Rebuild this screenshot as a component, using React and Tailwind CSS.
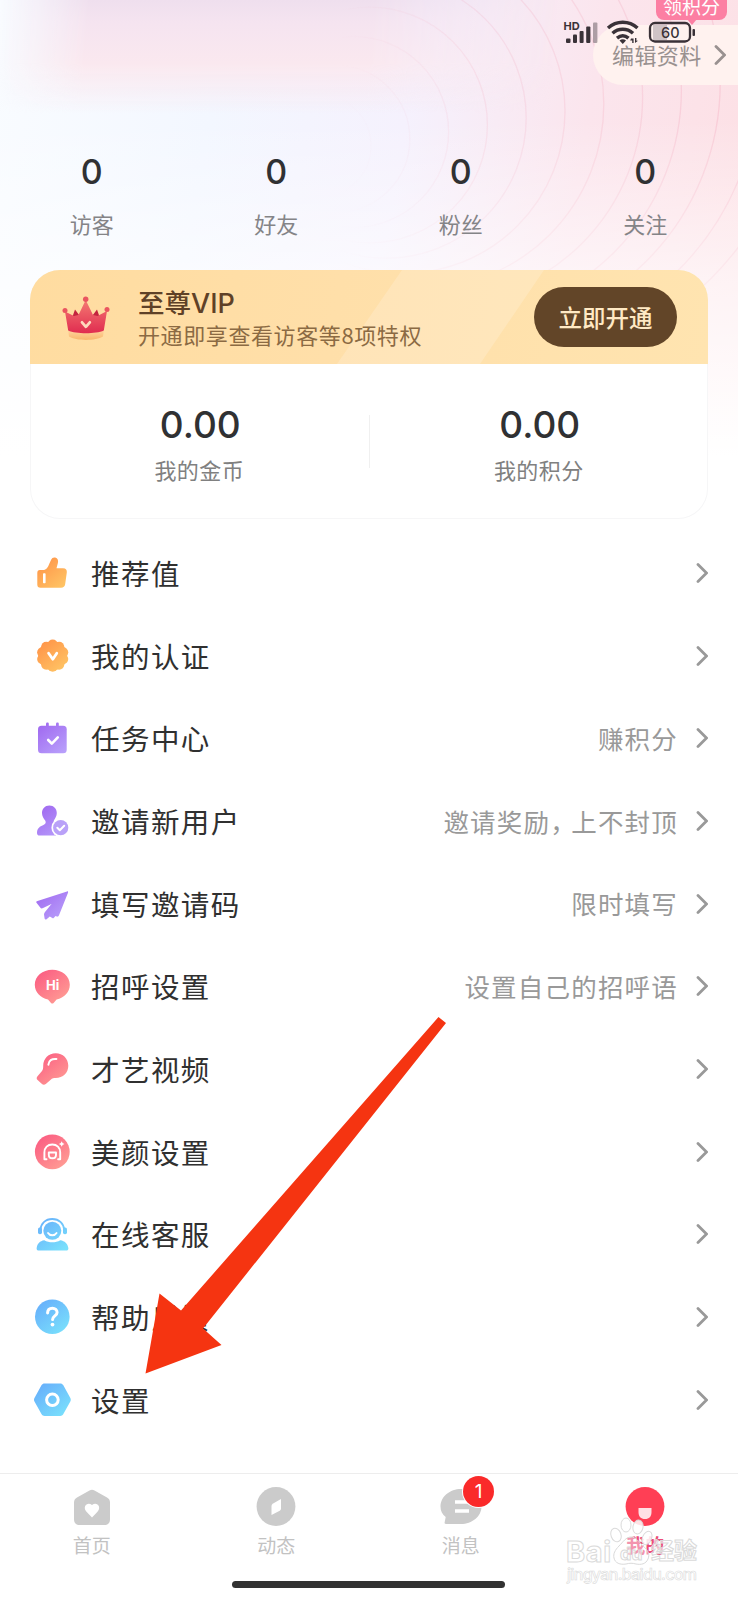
const ROWS = [
  { label: '推荐值', icon: 'thumb' },
  { label: '我的认证', icon: 'verified' },
  { label: '任务中心', icon: 'task', note: '赚积分' },
  { label: '邀请新用户', icon: 'invite', note: <>邀请奖励<span className="inline-block w-[21px]">，</span>上不封顶</> },
  { label: '填写邀请码', icon: 'plane', note: '限时填写' },
  { label: '招呼设置', icon: 'greet', note: '设置自己的招呼语' },
  { label: '才艺视频', icon: 'mic' },
  { label: '美颜设置', icon: 'beauty' },
  { label: '在线客服', icon: 'support' },
  { label: '帮助反馈', icon: 'help' },
  { label: '设置', icon: 'settings' },
];

const STATS = ['访客', '好友', '粉丝', '关注'];

const BUMPS = Array.from({ length: 10 }, (_, i) => {
  const a = (i * Math.PI) / 5 - Math.PI / 2;
  return { x: 18.7 + 11 * Math.cos(a), y: 16.7 + 11 * Math.sin(a) };
});

// Ripples drift to the right and up as they grow
const RIPPLES = Array.from({ length: 12 }, (_, i) => ({
  cx: 320 + 16.5 * i,
  cy: 146 - 7 * i,
  r: 51 + 22.3 * i,
}));

const Gradient = ({ id, from, to }) => (
  <linearGradient id={id} gradientUnits="userSpaceOnUse" x1="6" y1="3" x2="30" y2="33">
    <stop offset="0" stopColor={from} />
    <stop offset="1" stopColor={to} />
  </linearGradient>
);

const Gradients = () => (
  <svg className="absolute w-0 h-0" aria-hidden="true">
    <defs>
      <Gradient id="orange" from="#ff9348" to="#ffc766" />
      <Gradient id="purple" from="#a069f0" to="#b9a1fb" />
      <Gradient id="pink" from="#fb5f83" to="#ff9d94" />
      <Gradient id="blue" from="#68b1fb" to="#79e0fc" />
    </defs>
  </svg>
);

const ICONS = {
  thumb: (
    <>
      <path
        fill="url(#orange)"
        d="M5.8 14H9c3.200 0 5-2.600 6.300-6.300L17 4c.9-2 2.400-2.800 4.200-2.400 2.600.6 3.300 3 2.700 5.400L22.500 12.200H29c3 0 4.100 1.800 3.800 4.300l-1.600 11.500c-.4 2.500-1.700 3.800-4.200 3.800H6.500c-2.100 0-3.200-1.100-3.200-3.200V17c0-1.900.9-3 2.500-3z"
      />
      <rect x="9" y="17.200" width="2.600" height="10" rx=".8" fill="#fff" />
    </>
  ),
  verified: (
    <>
      <g fill="url(#orange)">
        <circle cx="18.700" cy="16.700" r="14.500" />
        {BUMPS.map((b, i) => (
          <circle key={i} cx={b.x} cy={b.y} r="5.100" />
        ))}
      </g>
      <path d="M14.600 14.200l4.200 6 4-6" fill="none" stroke="#fff" strokeWidth="2.800" strokeLinecap="round" strokeLinejoin="round" />
    </>
  ),
  task: (
    <>
      <g fill="url(#purple)">
        <rect x="4" y="4.800" width="28.700" height="27.500" rx="3.500" />
        <rect x="12" y="1.600" width="2.800" height="6" rx="1.200" />
        <rect x="22" y="1.600" width="2.800" height="6" rx="1.200" />
      </g>
      <path d="M14.200 19l3.600 3.600 6-6.200" fill="none" stroke="#fff" strokeWidth="2.600" strokeLinecap="round" strokeLinejoin="round" />
    </>
  ),
  invite: (
    <>
      <path
        fill="url(#purple)"
        d="M15.400 1.600c4.400 0 7.400 3.200 7.400 7.400 0 3.400-1.600 5.200-2.800 7.200-.8 1.500.2 2.800 2 3.600v11.800H6c-2.400 0-3.200-1.400-3-3.400.4-4 3-6 6-7 2.600-.9 3.400-2.600 2.200-4.600C9.700 14.200 8 12.400 8 9c0-4.200 3-7.400 7.400-7.400z"
      />
      <circle cx="26.700" cy="23.700" r="9.300" fill="#fff" />
      <circle cx="26.700" cy="23.700" r="7.600" fill="#b9a1f8" />
      <path d="M23.300 23.800l2.500 2.400 4.400-4.400" fill="none" stroke="#fff" strokeWidth="2" strokeLinecap="round" strokeLinejoin="round" />
    </>
  ),
  plane: (
    <path
      fill="url(#purple)"
      d="M33 4.400c1-.2 1.400.4 1 1.300L25 28.200c-.4 1-1.200 1.800-2.200 1.300l-1.300-.6-1.800 2c-.4.500-.9.500-1.400.1l-2.500-1.500-3.200 2.700c-.9.700-1.800.4-2-.7l-.6-4c0-1 .4-1.600 1-2.400l6.500-8-8.400 4c-1.200.6-2.200.5-2.900-.6l-3.500-4.400c-.8-1-.4-1.900.8-2.100z"
    />
  ),
  greet: (
    <>
      <path
        fill="url(#pink)"
        d="M18.300.8c9.800 0 17.500 6.600 17.500 15 0 7.400-5.600 13.200-13.200 14.800l-3 3.400c-.8.800-1.800.8-2.600 0l-3-3.400C6.400 29 .8 23.200.8 15.800.8 7.400 8.500.8 18.300.8z"
      />
      <text x="18.600" y="20.800" textAnchor="middle" fill="#fff" className="text-[13px] font-bold font-['Inter',sans-serif]">
        Hi
      </text>
    </>
  ),
  mic: (
    <>
      <path
        fill="url(#pink)"
        d="M21.700 1.300c7.200 0 12.600 5.400 12.600 12.500 0 7-5.200 12.300-12.600 12.300-2 0-3.400.3-5 1.600l-4.600 4c-1.600 1.300-3 1.300-4.400 0l-4.100-3.700c-1.200-1.200-1.200-2.500-.1-3.800l4.500-5.200c1.200-1.500 1.200-3 1.200-5.200 0-7.100 5.400-12.500 12.500-12.500z"
      />
      <path d="M14.400 12.700c.4-4 3.200-6.200 8-5.700" fill="none" stroke="#fff" strokeWidth="2" strokeLinecap="round" />
    </>
  ),
  beauty: (
    <>
      <circle cx="18.300" cy="16.800" r="17.400" fill="url(#pink)" />
      <g fill="none" stroke="#fff" strokeWidth="1.900" strokeLinecap="round" strokeLinejoin="round">
        <path d="M12.500 24.200h-2.100v-6.700c0-4.800 3.300-8 7.900-8s7.900 3.200 7.900 8v6.700h-2.100" />
        <path d="M14.800 17.500h7.200v2.200c0 2.300-1.300 3.600-3.600 3.600s-3.600-1.300-3.600-3.600z" />
      </g>
      <path d="M27.700 6.200l.9 1.900 1.900.9-1.900.9-.9 1.900-.9-1.900-1.900-.9 1.900-.9z" fill="#fff" />
    </>
  ),
  support: (
    <>
      <circle cx="18.300" cy="13.800" r="9" fill="url(#blue)" />
      <path d="M6.200 13.500C6.700 6.500 11.500 2 18.300 2s11.600 4.500 12.100 11.500" fill="none" stroke="url(#blue)" strokeWidth="1.800" />
      <rect x="4" y="10.500" width="4" height="6.800" rx="1.800" fill="url(#blue)" />
      <rect x="29" y="10.500" width="4" height="6.800" rx="1.800" fill="url(#blue)" />
      <path d="M14 16c1.800 3 6.800 3 8.600 0" fill="none" stroke="#fff" strokeWidth="1.800" strokeLinecap="round" />
      <path fill="url(#blue)" d="M10.300 23.300c4.600 2.700 11.400 2.700 16 0 4.600.7 7.200 3.300 8 7.400.4 1.800-.4 2.900-2.300 2.900H5c-1.900 0-2.700-1.100-2.300-2.900.8-4.100 3-6.700 7.600-7.400z" />
    </>
  ),
  help: (
    <>
      <circle cx="18.300" cy="16.800" r="17.300" fill="url(#blue)" />
      <path d="M13.600 12.900c.1-3 2.100-4.700 4.800-4.700s4.700 1.700 4.700 4.300c0 3.200-4.500 3.700-4.500 7" fill="none" stroke="#fff" strokeWidth="3" strokeLinecap="round" />
      <circle cx="18.500" cy="24.600" r="1.900" fill="#fff" />
    </>
  ),
  settings: (
    <>
      <path fill="url(#blue)" d="M10.600.4h15.600c1.400 0 2.300.5 3 1.700l7 12.600c.8 1.400.8 2.600 0 4l-7 12.500c-.7 1.200-1.600 1.700-3 1.700H10.600c-1.400 0-2.300-.5-3-1.700L.6 18.700c-.8-1.400-.8-2.600 0-4l7-12.600c.7-1.200 1.600-1.700 3-1.700z" />
      <circle cx="18.400" cy="16.800" r="5.800" fill="none" stroke="#fff" strokeWidth="3" />
    </>
  ),
};

const Chevron = ({ className }) => (
  <svg viewBox="0 0 12 20" className={className} fill="none" stroke="currentColor" strokeWidth="2.800">
    <path d="M2 1.500l8.500 8.500L2 18.500" strokeLinecap="round" />
  </svg>
);

const Backdrop = () => (
  <div className="absolute inset-x-0 top-0 h-[480px] overflow-hidden bg-[linear-gradient(100deg,#f9fcff_0%,#f3f7ff_28%,#f5f1fd_52%,#fbe5ed_74%,#fddfe3_100%)]">
    <div className="absolute inset-x-0 top-0 h-[115px] bg-[linear-gradient(180deg,#efdfee_0%,#f5e4f0_20%,#fae8ef_55%,#fae8f000_100%)] [mask-image:linear-gradient(95deg,transparent_0%,#000_12%,#000_50%,transparent_75%)]" />
    <svg
      viewBox="0 0 738 480"
      className="absolute inset-0 w-full h-full [mask-image:linear-gradient(90deg,transparent_340px,#000_480px)]"
      fill="none"
      stroke="#f3a9bd"
    >
      {RIPPLES.map((c, i) => (
        <circle key={i} cx={c.cx} cy={c.cy} r={c.r} opacity={0.12 + i * 0.025} strokeWidth="1.300" />
      ))}
    </svg>
    <div className="absolute inset-0 bg-[linear-gradient(180deg,#ffffff00_25%,#ffffff99_58%,#ffffff_95%)]" />
  </div>
);

const StatusBar = () => (
  <svg viewBox="0 0 140 26" className="absolute top-[19px] left-[562px] w-[140px] h-[26px]">
    <text x="1.500" y="10.500" fill="#3a3238" className="text-[11px] font-bold font-['Inter',sans-serif]">HD</text>
    <g fill="#3a3238">
      <rect x="4" y="19.500" width="4.500" height="4.500" rx="1" />
      <rect x="11" y="15.500" width="4" height="8.500" rx="1" />
      <rect x="17.600" y="12" width="4" height="12" rx="1" />
      <rect x="24.200" y="7.500" width="4.200" height="16.500" rx="1" />
      <rect x="31" y="3.500" width="4.400" height="20.500" rx="1" opacity=".4" />
    </g>
    <g fill="none" stroke="#3a3238" strokeWidth="3.500">
      <path d="M46 9c8.500-7.600 21-7.600 29.500 0" />
      <path d="M50.500 14.200c6-5.200 14.500-5.200 20.500 0" />
      <path d="M55 19.200c3.600-3 8-3 11.500 0" />
    </g>
    <path d="M57.500 21.500c2-1.600 4.500-1.600 6.500 0l-3.200 3.400zM69 19.500h2.600V24h-1.400v-2.500h-2zM73 24v-5h1.400v2.800h1.600z" fill="#3a3238" />
    <rect x="91" y="6" width="14" height="15" fill="#cfc3c6" />
    <rect x="88" y="4" width="40" height="18.500" rx="5" fill="none" stroke="#3a3238" strokeWidth="2.300" />
    <rect x="130.500" y="10" width="2.500" height="7" rx="1" fill="#3a3238" />
    <text x="108.300" y="18.500" textAnchor="middle" fill="#3a3238" className="text-[14.500px] font-medium font-['Inter',sans-serif]">60</text>
  </svg>
);

const Crown = () => (
  <svg viewBox="0 0 48 48" className="w-[48px] h-[48px]">
    <defs>
      <linearGradient id="crown" x1="0" y1="0" x2="0" y2="1">
        <stop offset="0" stopColor="#f47a72" />
        <stop offset="1" stopColor="#e02c50" />
      </linearGradient>
      <linearGradient id="crownBase" x1="0" y1="0" x2="0" y2="1">
        <stop offset="0" stopColor="#ffd6a4" />
        <stop offset="1" stopColor="#f9b86d" />
      </linearGradient>
    </defs>
    <path d="M6 35c8 3.600 28 3.600 36 0l-1 7.500c-7 4.500-27 4.500-34 0z" fill="url(#crownBase)" />
    <path d="M10 24l3-8.500 6 8zM38 24l-3-8.500-6 8z" fill="#c3243f" />
    <path d="M3 17.500l9 4.500 4.500-1L23.700 6 31 21l4.500 1 9.500-5-3.200 19.500c-8 3.600-27.600 3.600-35.600 0z" fill="url(#crown)" />
    <circle cx="23.700" cy="5.200" r="2.700" fill="#ea5560" />
    <circle cx="3" cy="16.500" r="2.500" fill="#ea5560" />
    <circle cx="45" cy="15.500" r="2.500" fill="#ea5560" />
    <path d="M20 28.300l3.900 4.500 3.900-4.500" fill="none" stroke="#ffd9bd" strokeWidth="2.800" strokeLinecap="round" strokeLinejoin="round" />
  </svg>
);

const Balance = ({ label }) => (
  <div className="flex-1 flex flex-col items-center">
    <span className="mt-[40px] ml-[2px] h-[42px] leading-[42px] font-['Inter',sans-serif] text-[37px] font-medium text-[#303133]">0.00</span>
    <span className="mt-[7px] h-[32px] leading-[32px] text-[22px] tracking-[0.400px] text-[#808080]">{label}</span>
  </div>
);

const VipCard = () => (
  <div className="mt-[29px] ml-[30px] mr-[30px] h-[249px] rounded-[30px] bg-white overflow-hidden ring-1 ring-inset ring-[#f6f6f7]">
    <div className="relative h-[94px] bg-[linear-gradient(100deg,#ffdca0_0%,#ffdfa9_45%,#ffe4b0_100%)] flex items-center">
      <svg viewBox="0 0 678 94" className="absolute inset-0 w-full h-full">
        <path d="M372 0h142l-64 94H307z" fill="#fff" opacity=".18" />
      </svg>
      <div className="relative ml-[32px] mt-[2px]">
        <Crown />
      </div>
      <div className="relative ml-[28px] mt-[1px] flex-1 flex flex-col">
        <span className="h-[34px] leading-[34px] text-[26.500px] font-medium text-[#5f4127]">
          至尊<span className="font-['Inter',sans-serif] text-[27px]">VIP</span>
        </span>
        <span className="-mt-[1px] h-[32px] leading-[32px] text-[22px] tracking-[0.600px] text-[#8b6a43]">开通即享查看访客等8项特权</span>
      </div>
      <button className="relative mr-[31px] w-[143px] h-[60px] pt-[2px] rounded-full bg-[#624528] text-[#ffe9c4] text-[23.500px] font-medium">立即开通</button>
    </div>
    <div className="relative flex">
      <Balance label="我的金币" />
      <div className="mt-[51px] w-px h-[53px] bg-[#f0f0f0]" />
      <Balance label="我的积分" />
    </div>
  </div>
);

const MenuRow = ({ row }) => (
  <div className="h-[82.700px] pl-[34px] pr-[30px] flex items-center">
    <svg viewBox="0 0 37 36" className="w-[37px] h-[36px] -mt-px overflow-visible">{ICONS[row.icon]}</svg>
    <span className="ml-[20px] -mt-[2px] flex-1 text-[28.500px] tracking-[1.450px] text-[#303030]">{row.label}</span>
    {row.note && (
      <span className="mr-[18px] -mt-[3px] text-[25.500px] tracking-[1.200px] text-[#999999]">{row.note}</span>
    )}
    <Chevron className="w-[12px] h-[20px] text-[#999999] -mt-[3px]" />
  </div>
);

const TABS = [
  {
    label: '首页',
    icon: (
      <>
        <path fill="#cbcbcb" d="M16.500 3.500c1.700-1 3.300-1 5 0L34 10.500c2 1.200 3 2.700 3 5V32c0 4-2 6-6 6H7c-4 0-6-2-6-6V15.500c0-2.300 1-3.800 3-5z" />
        <path fill="#fff" d="M19 30.500l-5.500-5.800c-4.500-5 1-10.700 5.500-6.700 4.500-4 10 1.700 5.500 6.700z" />
      </>
    ),
  },
  {
    label: '动态',
    icon: (
      <>
        <circle cx="19" cy="19.500" r="19.400" fill="#cbcbcb" />
        <path fill="#fff" d="M24 12v9.500c0 1-.5 1.700-1.300 2.200L14.500 28v-9c0-1 .4-1.800 1.200-2.300z" />
      </>
    ),
  },
  {
    label: '消息',
    badge: 1,
    icon: (
      <>
        <path fill="#cbcbcb" d="M19 2c11 0 20.500 7.500 20.500 17.500S30 37 19 37H4c-1.200 0-1.700-.8-1.300-2l1-5C0 27-1.500 23.500-1.500 19.500-1.500 9.500 8 2 19 2z" />
        <path d="M13 15h12M13 24h14" stroke="#fff" strokeWidth="3.600" />
      </>
    ),
  },
  {
    label: '我的',
    active: true,
    icon: (
      <>
        <circle cx="19" cy="19.500" r="19.400" fill="#ff3f55" />
        <path fill="#ffe0e4" d="M12.500 21h13v4c0 4.500-2.300 7-6.500 7s-6.500-2.500-6.500-7z" />
      </>
    ),
  },
];

const TabBar = () => (
  <div className="h-[127px] border-t border-[#ededed] bg-white flex flex-col">
    <div className="flex">
      {TABS.map(tab => (
        <div key={tab.label} className="relative flex-1 flex flex-col items-center pt-[13px] pr-[1px]">
          <svg viewBox="0 0 38 39" className="w-[38px] h-[39px] overflow-visible">{tab.icon}</svg>
          <span className={`mt-[4px] h-[30px] leading-[30px] text-[19px] ${tab.active ? 'font-bold text-[#ec4d78]' : 'text-[#c2c2c2]'}`}>
            {tab.label}
          </span>
          {tab.badge && (
            <span className="absolute top-[2px] left-[94px] w-[31px] h-[31px] rounded-full bg-[#fa2a2a] text-white font-['Inter',sans-serif] text-[19px] leading-[31px] text-center ring-1 ring-white">
              {tab.badge}
            </span>
          )}
        </div>
      ))}
    </div>
    <div className="ml-[232px] mt-[21px] w-[273px] h-[7px] rounded-full bg-[#323232]" />
  </div>
);

const Watermark = () => (
  <div className="absolute left-[566px] top-[1518px] w-[134px] h-[76px]">
    <svg viewBox="0 0 134 76" className="w-full h-full overflow-visible">
      <g fill="#fff" fillOpacity=".85" stroke="#dadada" strokeWidth="1">
        <ellipse cx="50" cy="17" rx="5" ry="7" transform="rotate(-20 50 17)" />
        <ellipse cx="60" cy="7" rx="5" ry="7" />
        <ellipse cx="72" cy="9" rx="5" ry="7" transform="rotate(12 72 9)" />
        <ellipse cx="81" cy="20" rx="4.500" ry="7" transform="rotate(25 81 20)" />
        <path fillOpacity=".4" d="M65 19c5 0 8 5 12 9 5 4 7 8 5 13s-7 6-12 5c-4-1-6-1-10 0-6 1-11-1-12-6-1-4 1-8 5-12s7-9 12-9z" />
        <text x="0" y="43.500" textLength="45" className="text-[29px] font-bold font-['Inter',sans-serif]">Bai</text>
        <text x="54" y="42" fillOpacity=".4" className="text-[18px] font-bold font-['Inter',sans-serif]">du</text>
        <text x="85" y="41" fillOpacity=".6" className="text-[23px] font-bold">经验</text>
        <text x="1" y="62" textLength="130" strokeWidth=".6" className="text-[16px] font-medium font-['Inter',sans-serif]">jingyan.baidu.com</text>
      </g>
    </svg>
  </div>
);

export default function App() {
  return (
    <div className="relative w-[738px] h-[1600px] overflow-hidden bg-white font-['Noto_Sans_CJK_SC',sans-serif]">
      <Gradients />
      <Backdrop />

      <div className="relative flex flex-col">
        <div className="mt-[25px] ml-auto w-[145px] h-[60px] pl-[19px] rounded-l-full bg-[#fff2ef] flex items-center text-[#999190]">
          <span className="-mt-[2px] text-[22px] tracking-[0.400px] whitespace-nowrap">编辑资料</span>
          <Chevron className="ml-[12px] w-[12px] h-[20px] shrink-0" />
        </div>

        <div className="mt-[65px] h-[91px] flex">
          {STATS.map(label => (
            <div key={label} className="flex-1 flex flex-col items-center pr-[1px]">
              <span className="h-[44px] leading-[44px] font-['Inter',sans-serif] text-[34px] font-medium text-[#303133]">0</span>
              <span className="mt-[13px] h-[32px] leading-[32px] text-[22px] text-[#848487]">{label}</span>
            </div>
          ))}
        </div>

        <VipCard />

        <div className="mt-[14px]">
          {ROWS.map(row => (
            <MenuRow key={row.label} row={row} />
          ))}
        </div>

        <div className="mt-[30px]">
          <TabBar />
        </div>
      </div>

      {/* points badge hanging over the edit pill */}
      <div className="absolute left-[656px] -top-[12px] w-[71px] h-[32px] rounded-[8px] bg-[#fc7fa3] text-white text-[19px] leading-[35px] text-center">
        领积分
        <div className="absolute left-[31px] top-[31px] border-x-[5px] border-t-[6px] border-x-transparent border-t-[#fc7fa3]" />
      </div>
      <StatusBar />
      <Watermark />

      <svg viewBox="0 0 738 1600" className="absolute inset-0 w-full h-full pointer-events-none">
        <path d="M438.500 1017l7.500 6L203 1328.500l18.500 16.500-76 28.500 14-80 21.500 17z" fill="#f53411" />
      </svg>
    </div>
  );
}
